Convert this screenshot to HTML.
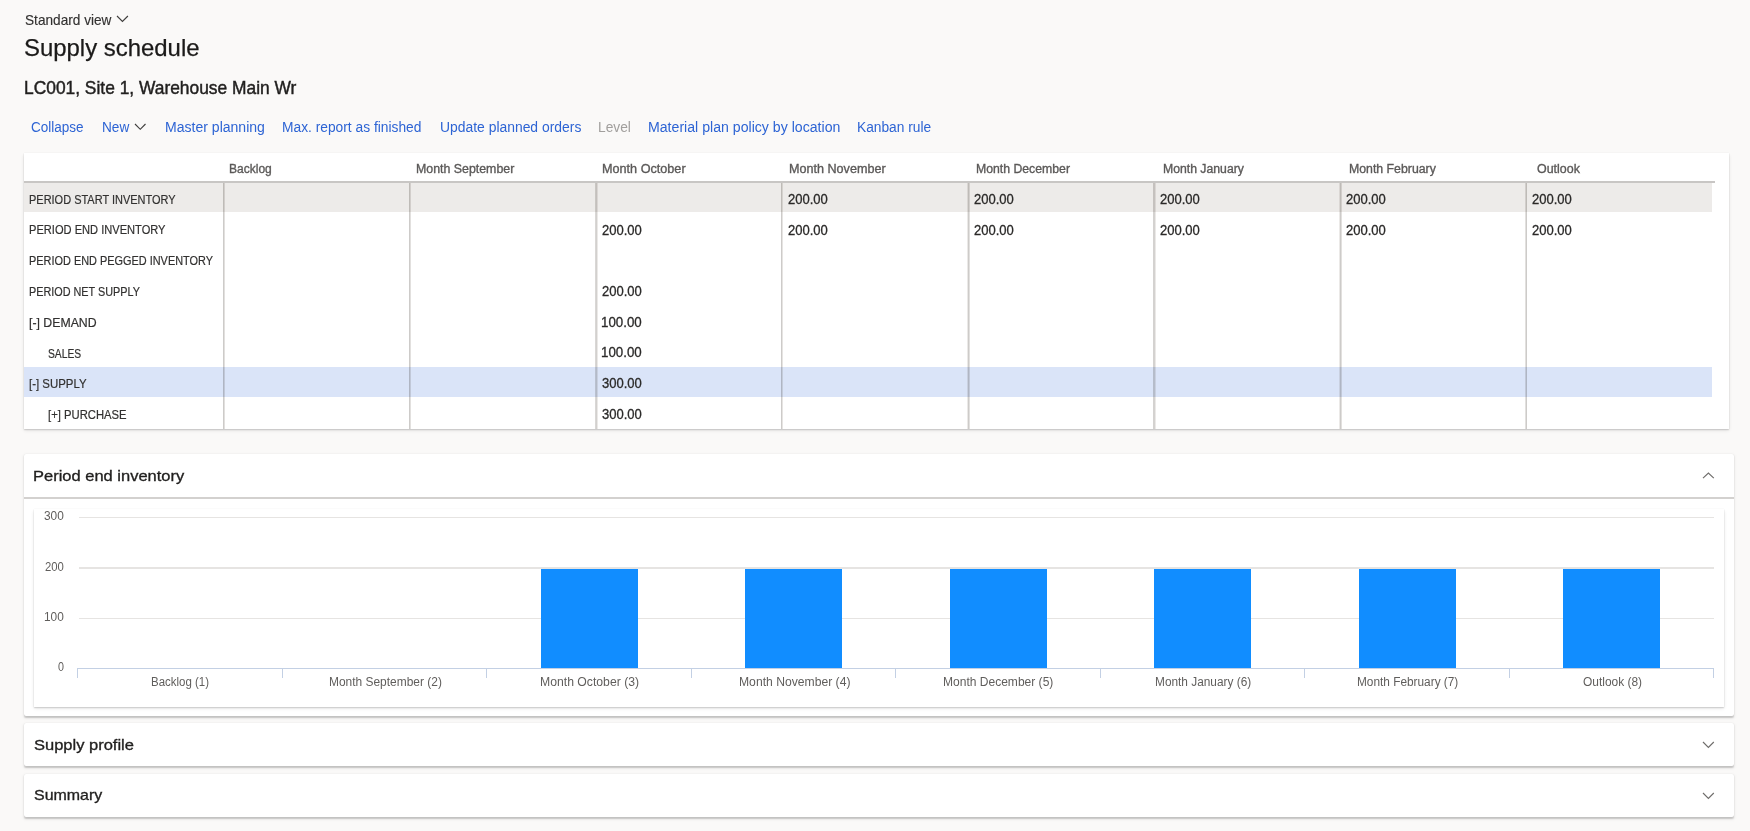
<!DOCTYPE html>
<html><head><meta charset="utf-8"><title>Supply schedule</title>
<style>
html,body{margin:0;padding:0;}
body{width:1750px;height:831px;overflow:hidden;background:#faf9f8;font-family:"Liberation Sans", sans-serif;position:relative;color:#323130;}
.a{position:absolute;white-space:nowrap;line-height:1;transform-origin:0 0;}
</style></head><body>

<svg style="position:absolute;left:115.30px;top:14.40px" width="14.90" height="9.40"><path d="M2 2 L7.449999999999996 7.400000000000002 L12.899999999999991 2" fill="none" stroke="#3f3e3d" stroke-width="1.15" stroke-linecap="butt" stroke-linejoin="miter"/></svg>
<svg style="position:absolute;left:132.90px;top:121.80px" width="14.50" height="9.30"><path d="M2 2 L7.25 7.299999999999997 L12.5 2" fill="none" stroke="#3f3e3d" stroke-width="1.15" stroke-linecap="butt" stroke-linejoin="miter"/></svg>
<div style="position:absolute;left:24px;top:153px;width:1705px;height:276.2px;background:#fff;box-shadow:0 1.2px 1.2px rgba(0,0,0,0.14),0 1.6px 3.6px rgba(0,0,0,0.10),0 0 1px rgba(0,0,0,0.08);"></div>
<div style="position:absolute;left:24.00px;top:181.30px;width:1691.00px;height:1.90px;background:#c8c6c4;"></div>
<div style="position:absolute;left:24.00px;top:183.20px;width:1688.00px;height:28.50px;background:#edebe9;"></div>
<div style="position:absolute;left:24.00px;top:367.10px;width:1688.00px;height:29.70px;background:#dae4f8;"></div>
<div style="position:absolute;left:223px;top:183.2px;width:1px;height:246px;background:#cdcbc9;mix-blend-mode:multiply;"></div>
<div style="position:absolute;left:224px;top:183.2px;width:1px;height:246px;background:#e2e0de;mix-blend-mode:multiply;"></div>
<div style="position:absolute;left:409px;top:183.2px;width:1px;height:246px;background:#cdcbc9;mix-blend-mode:multiply;"></div>
<div style="position:absolute;left:410px;top:183.2px;width:1px;height:246px;background:#e2e0de;mix-blend-mode:multiply;"></div>
<div style="position:absolute;left:595px;top:183.2px;width:1px;height:246px;background:#d9d7d5;mix-blend-mode:multiply;"></div>
<div style="position:absolute;left:596px;top:183.2px;width:1px;height:246px;background:#d2d0ce;mix-blend-mode:multiply;"></div>
<div style="position:absolute;left:597px;top:183.2px;width:1px;height:246px;background:#ebe9e7;mix-blend-mode:multiply;"></div>
<div style="position:absolute;left:781px;top:183.2px;width:1px;height:246px;background:#cdcbc9;mix-blend-mode:multiply;"></div>
<div style="position:absolute;left:782px;top:183.2px;width:1px;height:246px;background:#e6e4e2;mix-blend-mode:multiply;"></div>
<div style="position:absolute;left:967px;top:183.2px;width:1px;height:246px;background:#ebe9e7;mix-blend-mode:multiply;"></div>
<div style="position:absolute;left:968px;top:183.2px;width:1px;height:246px;background:#cdcbc9;mix-blend-mode:multiply;"></div>
<div style="position:absolute;left:969px;top:183.2px;width:1px;height:246px;background:#e2e0de;mix-blend-mode:multiply;"></div>
<div style="position:absolute;left:1153px;top:183.2px;width:1px;height:246px;background:#d4d2d0;mix-blend-mode:multiply;"></div>
<div style="position:absolute;left:1154px;top:183.2px;width:1px;height:246px;background:#d4d2d0;mix-blend-mode:multiply;"></div>
<div style="position:absolute;left:1155px;top:183.2px;width:1px;height:246px;background:#ebe9e7;mix-blend-mode:multiply;"></div>
<div style="position:absolute;left:1339px;top:183.2px;width:1px;height:246px;background:#ebe9e7;mix-blend-mode:multiply;"></div>
<div style="position:absolute;left:1340px;top:183.2px;width:1px;height:246px;background:#cdcbc9;mix-blend-mode:multiply;"></div>
<div style="position:absolute;left:1341px;top:183.2px;width:1px;height:246px;background:#e2e0de;mix-blend-mode:multiply;"></div>
<div style="position:absolute;left:1525px;top:183.2px;width:1px;height:246px;background:#e2e0de;mix-blend-mode:multiply;"></div>
<div style="position:absolute;left:1526px;top:183.2px;width:1px;height:246px;background:#cdcbc9;mix-blend-mode:multiply;"></div>
<div style="position:absolute;left:24px;top:454px;width:1710px;height:262px;background:#fff;border-radius:2px;box-shadow:0 1.2px 1.2px rgba(0,0,0,0.14),0 1.6px 3.6px rgba(0,0,0,0.10),0 0 1px rgba(0,0,0,0.08);"></div>
<svg style="position:absolute;left:1700.80px;top:470.90px" width="14.80" height="9.20"><path d="M2 7.2000000000000455 L7.399999999999977 2 L12.799999999999955 7.2000000000000455" fill="none" stroke="#6f6d6b" stroke-width="1.15" stroke-linecap="butt" stroke-linejoin="miter"/></svg>
<div style="position:absolute;left:24.00px;top:497.00px;width:1710.00px;height:2.00px;background:#d3d1cf;"></div>
<div style="position:absolute;left:33.8px;top:508.5px;width:1690.5px;height:198.5px;background:#fff;box-shadow:0 1.2px 1.2px rgba(0,0,0,0.14),0 1.6px 3.6px rgba(0,0,0,0.10),0 0 1px rgba(0,0,0,0.08);"></div>
<div style="position:absolute;left:78.60px;top:516.80px;width:1635.60px;height:1.20px;background:#e6e4e2;"></div>
<div style="position:absolute;left:78.60px;top:567.40px;width:1635.60px;height:1.20px;background:#e6e4e2;"></div>
<div style="position:absolute;left:78.60px;top:618.00px;width:1635.60px;height:1.20px;background:#e6e4e2;"></div>
<div style="position:absolute;left:77.60px;top:668.00px;width:1636.60px;height:1.10px;background:#c3d0e4;"></div>
<div style="position:absolute;left:77.25px;top:668.00px;width:1.10px;height:9.60px;background:#c3d0e4;"></div>
<div style="position:absolute;left:281.75px;top:668.00px;width:1.10px;height:9.60px;background:#c3d0e4;"></div>
<div style="position:absolute;left:486.25px;top:668.00px;width:1.10px;height:9.60px;background:#c3d0e4;"></div>
<div style="position:absolute;left:690.75px;top:668.00px;width:1.10px;height:9.60px;background:#c3d0e4;"></div>
<div style="position:absolute;left:895.25px;top:668.00px;width:1.10px;height:9.60px;background:#c3d0e4;"></div>
<div style="position:absolute;left:1099.75px;top:668.00px;width:1.10px;height:9.60px;background:#c3d0e4;"></div>
<div style="position:absolute;left:1304.25px;top:668.00px;width:1.10px;height:9.60px;background:#c3d0e4;"></div>
<div style="position:absolute;left:1508.75px;top:668.00px;width:1.10px;height:9.60px;background:#c3d0e4;"></div>
<div style="position:absolute;left:1713.25px;top:668.00px;width:1.10px;height:9.60px;background:#c3d0e4;"></div>
<div style="position:absolute;left:540.50px;top:568.60px;width:97.10px;height:99.40px;background:#118dff;"></div>
<div style="position:absolute;left:745.00px;top:568.60px;width:97.10px;height:99.40px;background:#118dff;"></div>
<div style="position:absolute;left:949.50px;top:568.60px;width:97.10px;height:99.40px;background:#118dff;"></div>
<div style="position:absolute;left:1154.00px;top:568.60px;width:97.10px;height:99.40px;background:#118dff;"></div>
<div style="position:absolute;left:1358.50px;top:568.60px;width:97.10px;height:99.40px;background:#118dff;"></div>
<div style="position:absolute;left:1563.00px;top:568.60px;width:97.10px;height:99.40px;background:#118dff;"></div>
<div style="position:absolute;left:24px;top:723.3px;width:1710px;height:43px;background:#fff;border-radius:2px;box-shadow:0 1.2px 1.2px rgba(0,0,0,0.14),0 1.6px 3.6px rgba(0,0,0,0.10),0 0 1px rgba(0,0,0,0.08);"></div>
<svg style="position:absolute;left:1700.80px;top:740.10px" width="14.80" height="9.40"><path d="M2 2 L7.399999999999977 7.399999999999977 L12.799999999999955 2" fill="none" stroke="#6f6d6b" stroke-width="1.15" stroke-linecap="butt" stroke-linejoin="miter"/></svg>
<div style="position:absolute;left:24px;top:773.7px;width:1710px;height:43.3px;background:#fff;border-radius:2px;box-shadow:0 1.2px 1.2px rgba(0,0,0,0.14),0 1.6px 3.6px rgba(0,0,0,0.10),0 0 1px rgba(0,0,0,0.08);"></div>
<svg style="position:absolute;left:1700.80px;top:790.60px" width="14.80" height="9.40"><path d="M2 2 L7.399999999999977 7.399999999999977 L12.799999999999955 2" fill="none" stroke="#6f6d6b" stroke-width="1.15" stroke-linecap="butt" stroke-linejoin="miter"/></svg>
<div class="a" style="left:25.16px;top:13.00px;font-size:14.5px;color:#323130;-webkit-text-stroke:0.15px #323130;transform:scaleX(0.9407);">Standard view</div>
<div class="a" style="left:23.60px;top:36.00px;font-size:24px;color:#1b1a19;-webkit-text-stroke:0.25px #1b1a19;transform:scaleX(0.9966);">Supply schedule</div>
<div class="a" style="left:24.02px;top:80.00px;font-size:17.8px;color:#201f1e;-webkit-text-stroke:0.45px #201f1e;transform:scaleX(0.9773);">LC001, Site 1, Warehouse Main Wr</div>
<div class="a" style="left:30.63px;top:120.00px;font-size:14px;color:#2d64d4;transform:scaleX(0.9660);">Collapse</div>
<div class="a" style="left:101.83px;top:120.00px;font-size:14px;color:#2d64d4;transform:scaleX(0.9741);">New</div>
<div class="a" style="left:165.20px;top:120.00px;font-size:14px;color:#2d64d4;transform:scaleX(1.0031);">Master planning</div>
<div class="a" style="left:281.82px;top:120.00px;font-size:14px;color:#2d64d4;transform:scaleX(0.9843);">Max. report as finished</div>
<div class="a" style="left:440.31px;top:120.00px;font-size:14px;color:#2d64d4;transform:scaleX(0.9922);">Update planned orders</div>
<div class="a" style="left:598.12px;top:120.00px;font-size:14px;color:#a19f9d;transform:scaleX(0.9839);">Level</div>
<div class="a" style="left:648.49px;top:120.00px;font-size:14px;color:#2d64d4;transform:scaleX(1.0090);">Material plan policy by location</div>
<div class="a" style="left:856.52px;top:120.00px;font-size:14px;color:#2d64d4;transform:scaleX(0.9824);">Kanban rule</div>
<div class="a" style="left:229.44px;top:163.00px;font-size:12.5px;color:#5b5958;-webkit-text-stroke:0.35px #5b5958;transform:scaleX(0.9628);">Backlog</div>
<div class="a" style="left:415.91px;top:163.00px;font-size:12.5px;color:#5b5958;-webkit-text-stroke:0.35px #5b5958;transform:scaleX(0.9889);">Month September</div>
<div class="a" style="left:602.39px;top:163.00px;font-size:12.5px;color:#5b5958;-webkit-text-stroke:0.35px #5b5958;transform:scaleX(1.0110);">Month October</div>
<div class="a" style="left:788.99px;top:163.00px;font-size:12.5px;color:#5b5958;-webkit-text-stroke:0.35px #5b5958;transform:scaleX(1.0074);">Month November</div>
<div class="a" style="left:975.92px;top:163.00px;font-size:12.5px;color:#5b5958;-webkit-text-stroke:0.35px #5b5958;transform:scaleX(0.9800);">Month December</div>
<div class="a" style="left:1162.52px;top:163.00px;font-size:12.5px;color:#5b5958;-webkit-text-stroke:0.35px #5b5958;transform:scaleX(0.9780);">Month January</div>
<div class="a" style="left:1349.32px;top:163.00px;font-size:12.5px;color:#5b5958;-webkit-text-stroke:0.35px #5b5958;transform:scaleX(0.9841);">Month February</div>
<div class="a" style="left:1536.60px;top:163.00px;font-size:12.5px;color:#5b5958;-webkit-text-stroke:0.35px #5b5958;transform:scaleX(0.9953);">Outlook</div>
<div class="a" style="left:28.64px;top:194.00px;font-size:12.8px;color:#323130;-webkit-text-stroke:0.2px #323130;transform:scaleX(0.8576);">PERIOD START INVENTORY</div>
<div class="a" style="left:787.87px;top:192.00px;font-size:14px;color:#2b2a29;-webkit-text-stroke:0.3px #2b2a29;transform:scaleX(0.9302);">200.00</div>
<div class="a" style="left:973.96px;top:192.00px;font-size:14px;color:#2b2a29;-webkit-text-stroke:0.3px #2b2a29;transform:scaleX(0.9302);">200.00</div>
<div class="a" style="left:1160.05px;top:192.00px;font-size:14px;color:#2b2a29;-webkit-text-stroke:0.3px #2b2a29;transform:scaleX(0.9302);">200.00</div>
<div class="a" style="left:1346.14px;top:192.00px;font-size:14px;color:#2b2a29;-webkit-text-stroke:0.3px #2b2a29;transform:scaleX(0.9302);">200.00</div>
<div class="a" style="left:1532.23px;top:192.00px;font-size:14px;color:#2b2a29;-webkit-text-stroke:0.3px #2b2a29;transform:scaleX(0.9302);">200.00</div>
<div class="a" style="left:28.63px;top:224.00px;font-size:12.8px;color:#323130;-webkit-text-stroke:0.2px #323130;transform:scaleX(0.8673);">PERIOD END INVENTORY</div>
<div class="a" style="left:601.78px;top:223.00px;font-size:14px;color:#2b2a29;-webkit-text-stroke:0.3px #2b2a29;transform:scaleX(0.9302);">200.00</div>
<div class="a" style="left:787.87px;top:223.00px;font-size:14px;color:#2b2a29;-webkit-text-stroke:0.3px #2b2a29;transform:scaleX(0.9302);">200.00</div>
<div class="a" style="left:973.96px;top:223.00px;font-size:14px;color:#2b2a29;-webkit-text-stroke:0.3px #2b2a29;transform:scaleX(0.9302);">200.00</div>
<div class="a" style="left:1160.05px;top:223.00px;font-size:14px;color:#2b2a29;-webkit-text-stroke:0.3px #2b2a29;transform:scaleX(0.9302);">200.00</div>
<div class="a" style="left:1346.14px;top:223.00px;font-size:14px;color:#2b2a29;-webkit-text-stroke:0.3px #2b2a29;transform:scaleX(0.9302);">200.00</div>
<div class="a" style="left:1532.23px;top:223.00px;font-size:14px;color:#2b2a29;-webkit-text-stroke:0.3px #2b2a29;transform:scaleX(0.9302);">200.00</div>
<div class="a" style="left:28.65px;top:255.00px;font-size:12.8px;color:#323130;-webkit-text-stroke:0.2px #323130;transform:scaleX(0.8530);">PERIOD END PEGGED INVENTORY</div>
<div class="a" style="left:28.65px;top:286.00px;font-size:12.8px;color:#323130;-webkit-text-stroke:0.2px #323130;transform:scaleX(0.8462);">PERIOD NET SUPPLY</div>
<div class="a" style="left:601.78px;top:284.00px;font-size:14px;color:#2b2a29;-webkit-text-stroke:0.3px #2b2a29;transform:scaleX(0.9302);">200.00</div>
<div class="a" style="left:28.54px;top:317.00px;font-size:12.8px;color:#323130;-webkit-text-stroke:0.2px #323130;transform:scaleX(0.9609);">[-] DEMAND</div>
<div class="a" style="left:600.83px;top:315.00px;font-size:14px;color:#2b2a29;-webkit-text-stroke:0.3px #2b2a29;transform:scaleX(0.9524);">100.00</div>
<div class="a" style="left:47.99px;top:348.00px;font-size:12.8px;color:#323130;-webkit-text-stroke:0.2px #323130;transform:scaleX(0.8050);">SALES</div>
<div class="a" style="left:600.83px;top:345.00px;font-size:14px;color:#2b2a29;-webkit-text-stroke:0.3px #2b2a29;transform:scaleX(0.9524);">100.00</div>
<div class="a" style="left:28.61px;top:378.00px;font-size:12.8px;color:#323130;-webkit-text-stroke:0.2px #323130;transform:scaleX(0.8937);">[-] SUPPLY</div>
<div class="a" style="left:601.78px;top:376.00px;font-size:14px;color:#2b2a29;-webkit-text-stroke:0.3px #2b2a29;transform:scaleX(0.9302);">300.00</div>
<div class="a" style="left:48.42px;top:409.00px;font-size:12.8px;color:#323130;-webkit-text-stroke:0.2px #323130;transform:scaleX(0.8807);">[+] PURCHASE</div>
<div class="a" style="left:601.78px;top:407.00px;font-size:14px;color:#2b2a29;-webkit-text-stroke:0.3px #2b2a29;transform:scaleX(0.9302);">300.00</div>
<div class="a" style="left:33.26px;top:469.00px;font-size:14.5px;color:#201f1e;-webkit-text-stroke:0.32px #201f1e;transform:scaleX(1.1371);">Period end inventory</div>
<div class="a" style="left:44.05px;top:510.00px;font-size:12.5px;color:#605e5c;transform:scaleX(0.9500);">300</div>
<div class="a" style="left:45.00px;top:561.00px;font-size:12.5px;color:#605e5c;transform:scaleX(0.9048);">200</div>
<div class="a" style="left:44.05px;top:611.00px;font-size:12.5px;color:#605e5c;transform:scaleX(0.9500);">100</div>
<div class="a" style="left:58.00px;top:661.00px;font-size:12.5px;color:#605e5c;transform:scaleX(0.8571);">0</div>
<div class="a" style="left:151.37px;top:676.00px;font-size:12.3px;color:#605e5c;transform:scaleX(0.9328);">Backlog (1)</div>
<div class="a" style="left:328.83px;top:676.00px;font-size:12.3px;color:#605e5c;transform:scaleX(0.9713);">Month September (2)</div>
<div class="a" style="left:540.11px;top:676.00px;font-size:12.3px;color:#605e5c;transform:scaleX(0.9929);">Month October (3)</div>
<div class="a" style="left:738.51px;top:676.00px;font-size:12.3px;color:#605e5c;transform:scaleX(0.9883);">Month November (4)</div>
<div class="a" style="left:943.22px;top:676.00px;font-size:12.3px;color:#605e5c;transform:scaleX(0.9784);">Month December (5)</div>
<div class="a" style="left:1155.04px;top:676.00px;font-size:12.3px;color:#605e5c;transform:scaleX(0.9643);">Month January (6)</div>
<div class="a" style="left:1356.74px;top:676.00px;font-size:12.3px;color:#605e5c;transform:scaleX(0.9625);">Month February (7)</div>
<div class="a" style="left:1582.60px;top:676.00px;font-size:12.3px;color:#605e5c;transform:scaleX(0.9717);">Outlook (8)</div>
<div class="a" style="left:33.90px;top:738.00px;font-size:14.5px;color:#201f1e;-webkit-text-stroke:0.32px #201f1e;transform:scaleX(1.1375);">Supply profile</div>
<div class="a" style="left:33.90px;top:788.00px;font-size:14.5px;color:#201f1e;-webkit-text-stroke:0.32px #201f1e;transform:scaleX(1.1000);">Summary</div>
</body></html>
